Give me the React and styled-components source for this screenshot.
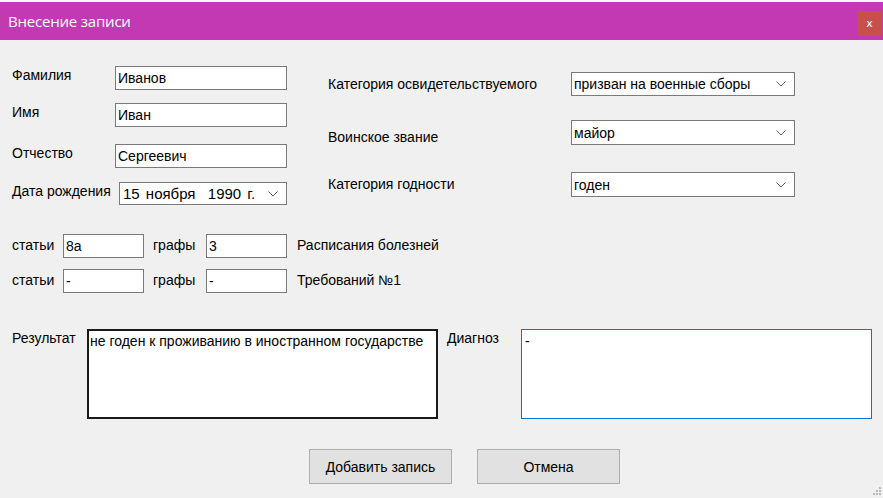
import React from 'react';
import styled, { createGlobalStyle } from 'styled-components';

const GlobalStyle = createGlobalStyle`
  html, body {
    margin: 0;
    padding: 0;
    background: #f0f0f0;
  }
  body {
    font-family: "Liberation Sans", Arial, sans-serif;
    font-size: 14px;
    color: #000;
  }
`;

const Window = styled.div`
  position: relative;
  width: 883px;
  height: 498px;
  background: #f0f0f0;
  border-top: 2px solid #f7f7f7;
  box-sizing: border-box;
  overflow: hidden;
`;

const TitleBar = styled.div`
  display: flex;
  align-items: flex-start;
  justify-content: space-between;
  height: 38px;
  background: #c239b3;
`;

const Title = styled.div`
  padding: 9px 0 0 8px;
  color: #fff;
  font-family: "Open Sans", "Noto Sans", sans-serif;
  font-size: 15px;
  line-height: 20px;
  letter-spacing: -0.2px;
`;

const CloseButton = styled.div`
  display: flex;
  align-items: center;
  justify-content: center;
  width: 25px;
  height: 25px;
  margin: 9px 1px 0 0;
  background: #c8504c;
  color: #fff;
  font-family: "DejaVu Sans", sans-serif;
  font-size: 11px;
`;

const Body = styled.div`
  padding: 26px 0 0 12px;
`;

const TopSection = styled.div`
  display: flex;
`;

const LeftCol = styled.div`
  display: flex;
  flex-direction: column;
  width: 275px;
`;

const RightCol = styled.div`
  display: flex;
  flex-direction: column;
  margin-left: 41px;
  padding-top: 6px;
`;

const FieldRow = styled.div`
  display: flex;
  align-items: flex-start;
  margin-top: ${p => p.$mt || 0}px;
`;

const FieldLabel = styled.div`
  width: ${p => p.$w}px;
  flex-shrink: 0;
  padding-top: 1px;
  line-height: 16px;
  white-space: nowrap;
`;

const ComboRow = styled.div`
  display: flex;
  align-items: center;
  margin-top: ${p => p.$mt || 0}px;
`;

const ComboLabel = styled.div`
  width: 243px;
  line-height: 16px;
  position: relative;
  top: ${p => p.$shift || 0}px;
  white-space: nowrap;
`;

const TextBox = styled.div`
  box-sizing: border-box;
  width: ${p => p.$w}px;
  height: 24px;
  padding: 0 2px;
  line-height: 22px;
  background: #fff;
  border: 1px solid #7a7a7a;
  white-space: nowrap;
  overflow: hidden;
`;

const Combo = styled.div`
  box-sizing: border-box;
  display: flex;
  align-items: center;
  justify-content: space-between;
  width: ${p => p.$w}px;
  height: ${p => p.$h || 24}px;
  padding: 0 8px 0 ${p => p.$pl || 2}px;
  background: #fff;
  border: 1px solid #7a7a7a;
  white-space: nowrap;
  font-size: ${p => p.$fs || 14}px;
`;

const DateText = styled.span`
  word-spacing: 2px;
  white-space: pre;
`;

const Chevron = () => (
  <svg width="10" height="6" viewBox="0 0 10 6">
    <polyline points="0.5,0.5 5,5 9.5,0.5" fill="none" stroke="#606060" strokeWidth="1" />
  </svg>
);

const StatsSection = styled.div`
  display: flex;
  flex-direction: column;
  gap: 11px;
  margin-top: 29px;
`;

const StatsRow = styled.div`
  display: flex;
  align-items: center;
`;

const StatsLabel = styled.div`
  width: ${p => p.$w}px;
  margin-left: ${p => p.$ml || 0}px;
  flex-shrink: 0;
  line-height: 16px;
  position: relative;
  top: -1px;
  white-space: nowrap;
`;

const NotesSection = styled.div`
  display: flex;
  align-items: flex-start;
  margin-top: 36px;
`;

const NoteLabel = styled.div`
  width: ${p => p.$w}px;
  margin-left: ${p => p.$ml || 0}px;
  padding-top: 1px;
  line-height: 16px;
`;

const TextArea = styled.div`
  box-sizing: border-box;
  width: 351px;
  height: 90px;
  line-height: 16px;
  background: #fff;
  border: ${p => (p.$focused ? '1px solid #0078d7' : '2px solid #1a1a1a')};
  padding-left: ${p => (p.$focused ? 3 : 1)}px;
  padding-top: ${p => (p.$focused ? 3 : 2)}px;
  white-space: nowrap;
`;

const ButtonBar = styled.div`
  display: flex;
  gap: 25px;
  margin-top: 30px;
  padding-left: 297px;
`;

const Button = styled.div`
  box-sizing: border-box;
  display: flex;
  align-items: center;
  justify-content: center;
  width: 143px;
  height: 35px;
  background: #e1e1e1;
  border: 1px solid #adadad;
`;

const SizeGrip = styled.svg`
  position: absolute;
  right: 2px;
  bottom: 3px;
`;

const App = () => {
  return (
    <>
      <GlobalStyle />
      <Window>
        <TitleBar>
          <Title>Внесение записи</Title>
          <CloseButton>x</CloseButton>
        </TitleBar>
        <Body>
          <TopSection>
            <LeftCol>
              <FieldRow>
                <FieldLabel $w={103}>Фамилия</FieldLabel>
                <TextBox $w={172}>Иванов</TextBox>
              </FieldRow>
              <FieldRow $mt={13}>
                <FieldLabel $w={103}>Имя</FieldLabel>
                <TextBox $w={172}>Иван</TextBox>
              </FieldRow>
              <FieldRow $mt={17}>
                <FieldLabel $w={103}>Отчество</FieldLabel>
                <TextBox $w={172}>Сергеевич</TextBox>
              </FieldRow>
              <FieldRow $mt={14}>
                <FieldLabel $w={107}>Дата рождения</FieldLabel>
                <Combo $w={168} $h={23} $pl={3} $fs={15}>
                  <DateText>15 ноября  1990 г.</DateText>
                  <Chevron />
                </Combo>
              </FieldRow>
            </LeftCol>
            <RightCol>
              <ComboRow>
                <ComboLabel>Категория освидетельствуемого</ComboLabel>
                <Combo $w={224}>
                  призван на военные сборы
                  <Chevron />
                </Combo>
              </ComboRow>
              <ComboRow $mt={24}>
                <ComboLabel $shift={4}>Воинское звание</ComboLabel>
                <Combo $w={224} $h={25}>
                  майор
                  <Chevron />
                </Combo>
              </ComboRow>
              <ComboRow $mt={27}>
                <ComboLabel $shift={-1}>Категория годности</ComboLabel>
                <Combo $w={224} $h={25}>
                  годен
                  <Chevron />
                </Combo>
              </ComboRow>
            </RightCol>
          </TopSection>

          <StatsSection>
            <StatsRow>
              <StatsLabel $w={51}>статьи</StatsLabel>
              <TextBox $w={81}>8а</TextBox>
              <StatsLabel $w={53} $ml={9}>графы</StatsLabel>
              <TextBox $w={81}>3</TextBox>
              <StatsLabel $ml={10}>Расписания болезней</StatsLabel>
            </StatsRow>
            <StatsRow>
              <StatsLabel $w={51}>статьи</StatsLabel>
              <TextBox $w={81}>-</TextBox>
              <StatsLabel $w={53} $ml={9}>графы</StatsLabel>
              <TextBox $w={81}>-</TextBox>
              <StatsLabel $ml={10}>Требований №1</StatsLabel>
            </StatsRow>
          </StatsSection>

          <NotesSection>
            <NoteLabel $w={75}>Результат</NoteLabel>
            <TextArea>не годен к проживанию в иностранном государстве</TextArea>
            <NoteLabel $w={74} $ml={9}>Диагноз</NoteLabel>
            <TextArea $focused>-</TextArea>
          </NotesSection>

          <ButtonBar>
            <Button>Добавить запись</Button>
            <Button>Отмена</Button>
          </ButtonBar>
        </Body>
        <SizeGrip width="8" height="8" viewBox="0 0 8 8">
          <rect x="6" y="0" width="2" height="2" fill="#b8b8b8" />
          <rect x="3" y="3" width="2" height="2" fill="#b8b8b8" />
          <rect x="6" y="3" width="2" height="2" fill="#b8b8b8" />
          <rect x="0" y="6" width="2" height="2" fill="#b8b8b8" />
          <rect x="3" y="6" width="2" height="2" fill="#b8b8b8" />
          <rect x="6" y="6" width="2" height="2" fill="#b8b8b8" />
        </SizeGrip>
      </Window>
    </>
  );
};

export default App;
